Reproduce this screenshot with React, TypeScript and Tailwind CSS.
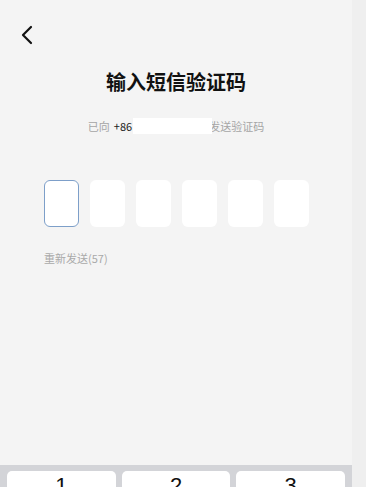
import React from 'react';

const font = { fontFamily: '"Noto Sans CJK SC", "Liberation Sans", sans-serif' };

export default function App() {
  const cells = [0, 1, 2, 3, 4, 5];
  return (
    <div className="flex h-[487px] w-[366px] overflow-hidden bg-[#efefef]" style={font}>
      <div className="flex h-full w-[352px] flex-col bg-[#f4f4f4]">
        <div className="flex-1">
          <div className="pl-[20px] pt-[25px]">
            <svg width="16" height="20" viewBox="0 0 16 20" fill="none">
              <path d="M11 2 L3 10 L11 18" stroke="#111" strokeWidth="2.2" strokeLinecap="round" strokeLinejoin="round" />
            </svg>
          </div>
          <h1 className="mt-[24px] text-center text-[20px] font-bold leading-[26px] text-[#111]">输入短信验证码</h1>
          <div className="mt-[23px] flex items-center justify-center text-[11px] leading-[16px] text-[#a5a5a5]">
            <span>已向</span>
            <span className="ml-[4px] text-[#222]">+86</span>
            <span className="relative z-10 ml-[1px] h-[16px] w-[79px] bg-white" />
            <span className="ml-[-3px]">发送验证码</span>
          </div>
          <div className="mt-[46px] flex gap-[11px] pl-[44px]">
            {cells.map((i) => (
              <div
                key={i}
                className={
                  i === 0
                    ? 'h-[47px] w-[35px] rounded-[6px] border border-[#7d9fc9] bg-white'
                    : 'h-[47px] w-[35px] rounded-[6px] bg-white'
                }
              />
            ))}
          </div>
          <div className="mt-[23px] pl-[44px] text-[11px] leading-[16px] text-[#a9a9a9]">重新发送(57)</div>
        </div>
        <div className="flex h-[22px] gap-[6px] bg-[#d3d4d8] px-[7px] pt-[6px]">
          {['1', '2', '3'].map((n) => (
            <div key={n} className="flex flex-1 justify-center rounded-t-[5px] bg-white pt-[2px] text-[22px] leading-[26px] text-[#111]" style={{ fontFamily: '"Liberation Sans", sans-serif' }}>
              {n}
            </div>
          ))}
        </div>
      </div>
      <div className="flex-1" />
    </div>
  );
}
